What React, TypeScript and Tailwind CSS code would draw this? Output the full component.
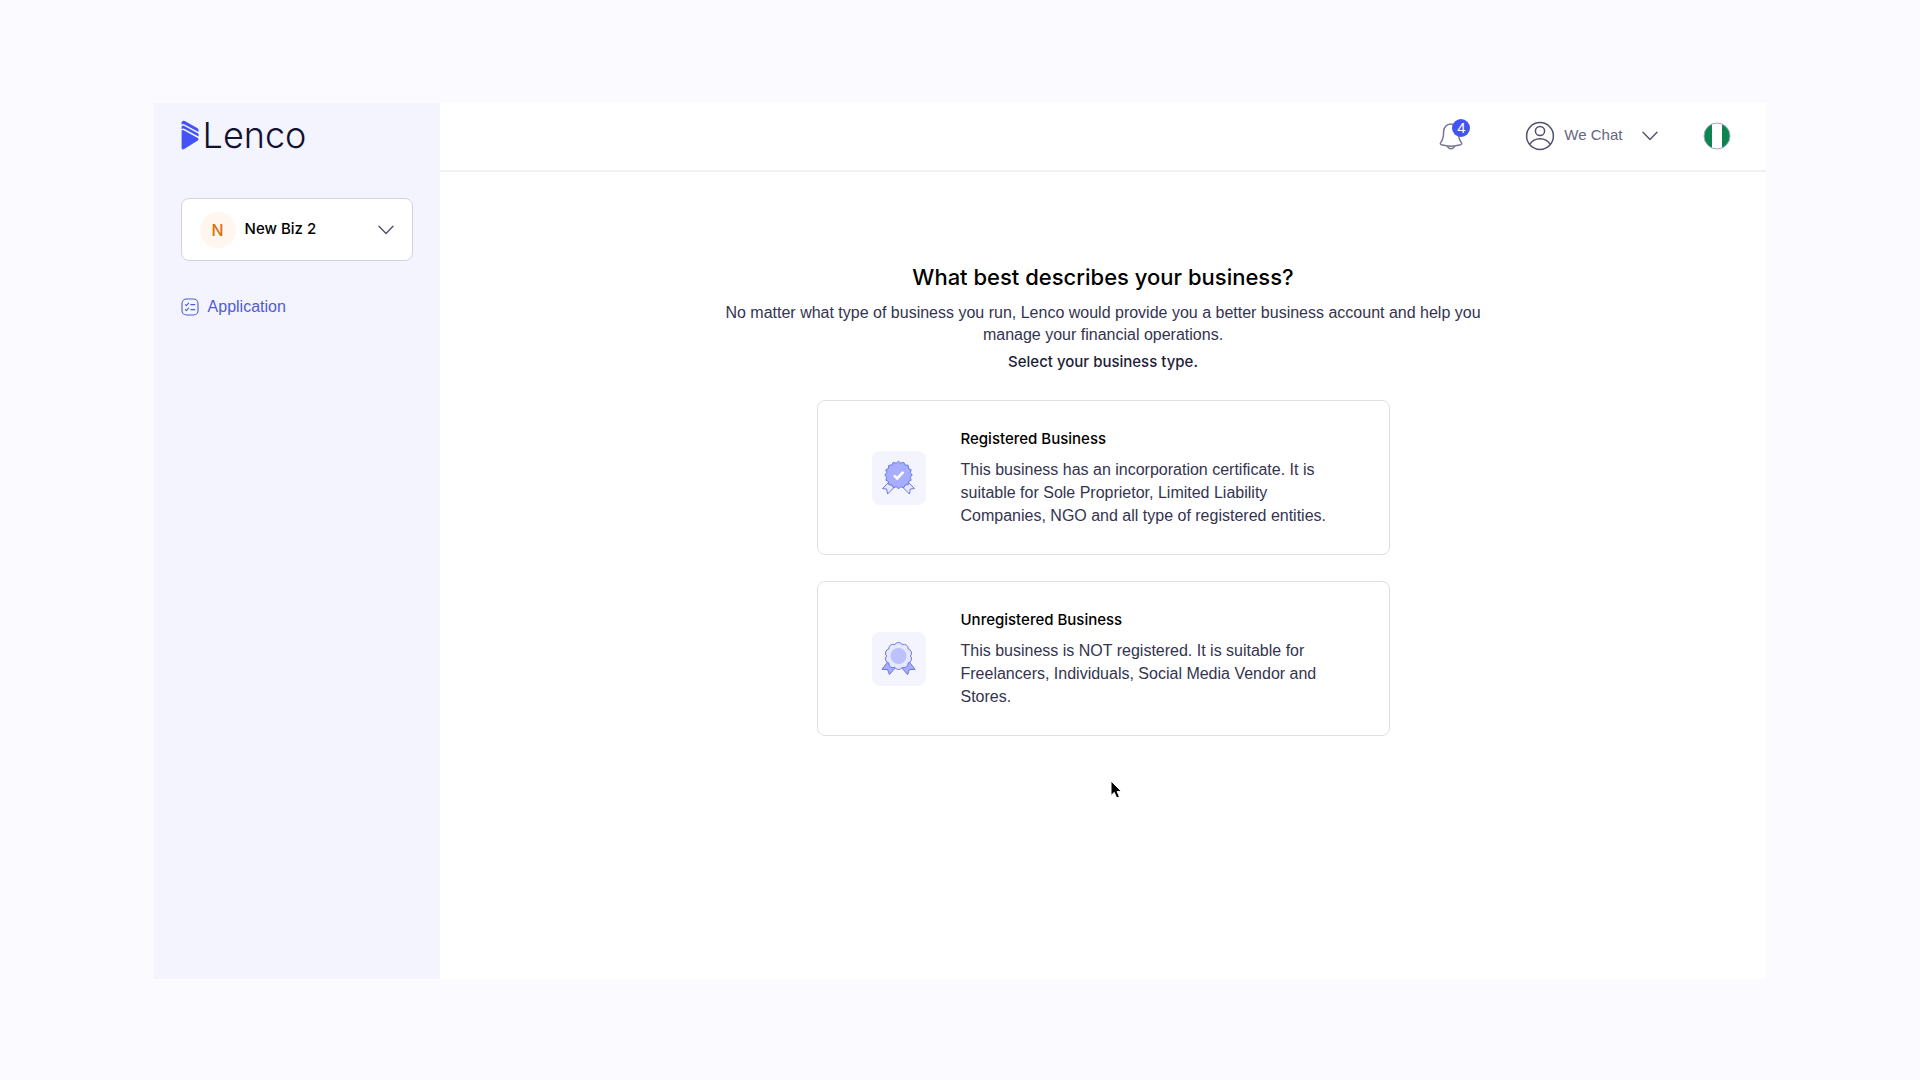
import type { ReactNode } from 'react'

const businessTypes = [
  {
    id: 'registered',
    title: 'Registered Business',
    description:
      'This business has an incorporation certificate. It is suitable for Sole Proprietor, Limited Liability Companies, NGO and all type of registered entities.',
    icon: <RegisteredIcon />,
  },
  {
    id: 'unregistered',
    title: 'Unregistered Business',
    description:
      'This business is NOT registered. It is suitable for Freelancers, Individuals, Social Media Vendor and Stores.',
    icon: <UnregisteredIcon />,
  },
]

function point(cx: number, cy: number, r: number, angle: number) {
  return `${(cx + r * Math.sin(angle)).toFixed(2)} ${(cy - r * Math.cos(angle)).toFixed(2)}`
}

// pointed seal edge
function starPath(cx: number, cy: number, outer: number, inner: number, tips: number) {
  const pts = [...Array(tips * 2)].map((_, i) => point(cx, cy, i % 2 ? inner : outer, (Math.PI * i) / tips))
  return `M${pts.join('L')}Z`
}

// rounded seal edge, one arc per lobe
function lobePath(cx: number, cy: number, r: number, lobes: number) {
  const pts = [...Array(lobes)].map((_, i) => point(cx, cy, r, (Math.PI * (2 * i + 1)) / lobes))
  return `M${pts[lobes - 1]}${pts.map((p) => `A4.4 4.4 0 0 1 ${p}`).join('')}Z`
}

function RegisteredIcon() {
  return (
    <svg viewBox="0 0 54 54" className="size-full" aria-hidden="true">
      <g fill="#e6e8ff" stroke="#6b76e0" strokeWidth="1" strokeLinejoin="round">
        <path d="M16.5 31.5L10.5 37.6L14.6 38L15.6 43L22.5 36Z" />
        <path d="M36.5 31.5L42.5 37.6L38.4 38L37.4 43L30.5 36Z" />
        <path d={starPath(26.5, 24, 13.7, 12, 16)} fill="#a7aeff" />
      </g>
      <path d="M22 24.4L25.2 27.4L31.4 20.8" fill="none" stroke="#fff" strokeWidth="2.6" />
    </svg>
  )
}

function UnregisteredIcon() {
  return (
    <svg viewBox="0 0 54 54" className="size-full" aria-hidden="true">
      <g fill="#a7aeff" stroke="#6b76e0" strokeWidth="1" strokeLinejoin="round">
        <path d="M15.6 30L10 37.4L15.6 37.6L17.4 42.6L24 35Z" />
        <path d="M37.4 30L43 37.4L37.4 37.6L35.6 42.6L29 35Z" />
        <path d={lobePath(26.5, 24, 12, 10)} fill="#e6e8ff" />
      </g>
      <circle cx="26.5" cy="24" r="8" fill="#bcc2ff" />
    </svg>
  )
}

function Chevron({ className }: { className: string }) {
  return (
    <svg viewBox="0 0 16 10" className={`h-[10px] w-4 ${className}`} fill="none" stroke="currentColor" strokeWidth="1.4" strokeLinecap="round" strokeLinejoin="round" aria-hidden="true">
      <path d="M1 1.2L8 8.4L15 1.2" />
    </svg>
  )
}

function Logo() {
  return (
    <a href="#" aria-label="Lenco" className="flex h-8 items-center gap-1">
      <svg viewBox="0 0 18 30" className="h-[30px] w-[18px] shrink-0" aria-hidden="true">
        <path d="M.6 11.4Q.6 9.4 2.6 10.3L16.8 18Q18.2 19.2 16.8 20.4L3.2 29Q.6 30.2 .6 28Z" fill="#4353f5" />
        <path d="M.6 6.8Q1.2 4.9 3.4 5.9L17.6 13.8V16.4L3.6 8.9Q1.8 8.1 .6 9.2Z" fill="#4353f5" />
        <path d="M.6 2.2Q1.4 0 3.8 1L16.6 8.2Q17.8 9 17.6 11.9L3.6 4.4Q1.8 3.5 .6 4.7Z" fill="#4353f5" />
      </svg>
      <span className="font-[Inter] text-4xl leading-8 font-light text-[#11112f]">Lenco</span>
    </a>
  )
}

function Sidebar() {
  return (
    <aside className="w-[286px] shrink-0 bg-[#f4f4ff] px-[27px] pt-4">
      <Logo />
      <button type="button" className="mt-[47px] flex h-[63px] w-full items-center rounded-lg border border-[#d3d3e0] bg-white px-[18px]">
        <span className="flex size-9 items-center justify-center rounded-full bg-[#fff6f0] font-[Inter] text-base font-medium text-[#d9730a]">N</span>
        <span className="ml-[9px] font-[Inter] text-[15px] font-medium text-black">New Biz 2</span>
        <Chevron className="ml-auto text-[#50506e]" />
      </button>
      <nav className="mt-[34px]">
        <a href="#" className="flex h-6 items-center gap-[9px] text-base text-[#4f5bd5]">
          <svg viewBox="0 0 18 18" className="size-[18px]" fill="none" stroke="currentColor" strokeWidth="1.1" strokeLinecap="round" strokeLinejoin="round" aria-hidden="true">
            <rect x="1" y="1" width="16" height="16" rx="4.5" />
            <path d="M4.4 6.6l1 1L7.6 5.2M4.4 11.6l1 1 2.2-2.4M9.8 6.6h4M9.8 11.6h4" />
          </svg>
          Application
        </a>
      </nav>
    </aside>
  )
}

function Header() {
  return (
    <header className="flex h-[69px] items-center justify-end border-b-2 border-[#f1f1f5] pr-[35px] pb-0.5">
      <button type="button" aria-label="Notifications" className="relative">
        <svg viewBox="0 0 24 28" className="h-7 w-6" fill="none" stroke="#77778f" strokeWidth="1.5" strokeLinecap="round" strokeLinejoin="round" aria-hidden="true">
          <path d="M12 2C7.4 2 4.6 5.6 4.6 10C4.6 15.6 3.6 18.2 1.8 20.4C1 21.6 1.2 22.4 2.4 22.8C8.4 24.6 15.6 24.6 21.6 22.8C22.8 22.4 23 21.6 22.2 20.4C20.4 18.2 19.4 15.6 19.4 10C19.4 5.6 16.6 2 12 2Z" />
          <path d="M8.6 24.4C9.4 27.4 14.6 27.4 15.4 24.4" />
        </svg>
        <span className="absolute -top-[3px] left-[13px] flex size-[18px] items-center justify-center rounded-full bg-[#4353f5] text-[15px] leading-none text-white">4</span>
      </button>
      <button type="button" className="ml-[62px] flex items-center text-[15px] text-[#66667f]">
        <svg viewBox="0 0 30 30" className="size-[30px]" fill="none" stroke="#50506e" strokeWidth="1.5" aria-hidden="true">
          <circle cx="15" cy="15" r="13.4" />
          <circle cx="15" cy="10" r="4.6" />
          <path d="M4.6 23.4C9.6 15.8 20.4 15.8 25.4 23.4" />
        </svg>
        <span className="ml-[9px]">We Chat</span>
        <Chevron className="ml-5 text-[#50506e]" />
      </button>
      <button type="button" aria-label="Nigeria" className="ml-[45px]">
        <svg viewBox="0 0 28 28" className="size-7" aria-hidden="true">
          <clipPath id="flag">
            <circle cx="14" cy="14" r="13" />
          </clipPath>
          <g clipPath="url(#flag)">
            <path d="M0 0h28v28H0z" fill="#fff" />
            <path d="M0 0h9v28H0zM19 0h9v28h-9z" fill="#0a8450" />
          </g>
          <circle cx="14" cy="14" r="13" fill="none" stroke="#a3a8b5" strokeWidth="1" />
        </svg>
      </button>
    </header>
  )
}

function BusinessCard({ title, description, icon }: { title: string; description: string; icon: ReactNode }) {
  return (
    <button type="button" className="flex w-full items-center gap-[35px] rounded-lg border border-[#dfdfe6] bg-white py-[27px] pr-12 pl-[54px] text-left">
      <span className="size-[54px] shrink-0 rounded-lg bg-[#f4f4ff]">{icon}</span>
      <span>
        <span className="block font-[Inter] text-[15px] leading-[22px] font-medium text-black">{title}</span>
        <span className="mt-2 block text-base leading-[23px] text-[#34344f]">{description}</span>
      </span>
    </button>
  )
}

function Pointer() {
  return (
    <svg viewBox="0 0 12 20" className="absolute top-full left-1/2 mt-11 ml-[7px] h-5 w-3" aria-hidden="true">
      <path d="M1 1V15.4L4.3 12.4L6.6 18L9.4 16.8L7.1 11.4H11.4Z" fill="#000" stroke="#fff" strokeWidth="1" />
    </svg>
  )
}

export default function App() {
  return (
    <div className="flex min-h-screen bg-[#fafaff] px-[8vw] pt-[103px] pb-[101px] font-['Liberation_Sans',Arial,sans-serif]">
      <div className="flex flex-1 bg-white">
        <Sidebar />
        <div className="min-w-0 flex-1">
          <Header />
          <main className="flex flex-col items-center pt-[87px] text-center">
            <h1 className="font-[Inter] text-[22px] leading-9 font-medium text-black">What best describes your business?</h1>
            <p className="mt-[7px] max-w-[780px] text-base leading-[22px] text-[#34344f]">
              No matter what type of business you run, Lenco would provide you a better business account and help you manage your financial operations.
            </p>
            <p className="mt-[5px] font-[Inter] text-[15px] leading-[22px] font-medium text-[#1d1d38]">Select your business type.</p>
            <div className="relative mt-[27px] flex w-full max-w-[573px] flex-col gap-[26px]">
              {businessTypes.map((type) => (
                <BusinessCard key={type.id} title={type.title} description={type.description} icon={type.icon} />
              ))}
              <Pointer />
            </div>
          </main>
        </div>
      </div>
    </div>
  )
}
